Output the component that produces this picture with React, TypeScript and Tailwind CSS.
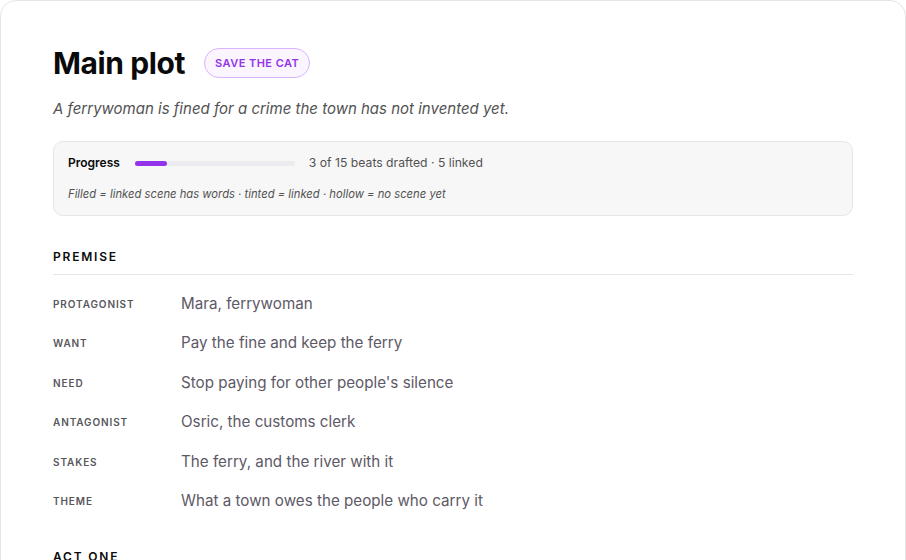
const premise = [
  { label: 'Protagonist', value: 'Mara, ferrywoman' },
  { label: 'Want', value: 'Pay the fine and keep the ferry' },
  { label: 'Need', value: "Stop paying for other people's silence" },
  { label: 'Antagonist', value: 'Osric, the customs clerk' },
  { label: 'Stakes', value: 'The ferry, and the river with it' },
  { label: 'Theme', value: 'What a town owes the people who carry it' },
]

export default function App() {
  const drafted = 3
  const total = 15

  return (
    <div className="h-[560px] overflow-hidden bg-white font-['Inter',sans-serif]">
      <div className="min-h-[700px] rounded-t-2xl border border-[#e5e5e5] bg-white px-[52px] pt-[42px]">
        <div className="flex items-center gap-[19px]">
          <h1 className="text-[30px] font-bold leading-[40px] tracking-[-0.4px] text-[#0a0a0a]">Main plot</h1>
          <span className="rounded-full border border-[#d8b4fe] bg-[#faf5ff] px-[10px] py-[7px] text-[11px] font-semibold leading-[14px] tracking-[0.45px] text-[#9333ea]">
            SAVE THE CAT
          </span>
        </div>
        <p className="mt-[16px] text-[15px] italic leading-[20px] text-[#525252]">
          A ferrywoman is fined for a crime the town has not invented yet.
        </p>

        <div className="mt-[22px] rounded-[10px] border border-[#e5e5e5] bg-[#f7f7f7] px-[14px] pt-[13px] pb-[14px]">
          <div className="flex items-center">
            <span className="text-[12px] font-semibold leading-[16px] text-[#0a0a0a]">Progress</span>
            <div className="ml-[15px] h-[5px] w-[160px] rounded-full bg-[#ebebf0]">
              <div className="h-full rounded-full bg-[#9333ea]" style={{ width: `${(drafted / total) * 100}%` }} />
            </div>
            <span className="ml-[14px] text-[12.2px] leading-[16px] text-[#525252]">
              {drafted} of {total} beats drafted · 5 linked
            </span>
          </div>
          <p className="mt-[16px] text-[11.25px] italic leading-[14px] text-[#525252]">
            Filled = linked scene has words · tinted = linked · hollow = no scene yet
          </p>
        </div>

        <h2 className="mt-[33px] text-[12px] font-semibold leading-[16px] tracking-[1.8px] text-[#0a0a0a]">PREMISE</h2>
        <div className="mt-[9px] border-t border-[#e5e5e5] pt-[9px]">
          {premise.map((row) => (
            <div key={row.label} className="flex h-[39.5px] items-center">
              <span className="w-[128px] shrink-0 text-[10px] font-semibold uppercase leading-[14px] tracking-[0.9px] text-[#57575c]">
                {row.label}
              </span>
              <span className="text-[15.2px] leading-[20px] text-[#5e5966]">{row.value}</span>
            </div>
          ))}
        </div>

        <h2 className="mt-[28px] text-[12px] font-semibold leading-[16px] tracking-[1.8px] text-[#0a0a0a]">ACT ONE</h2>
      </div>
    </div>
  )
}
